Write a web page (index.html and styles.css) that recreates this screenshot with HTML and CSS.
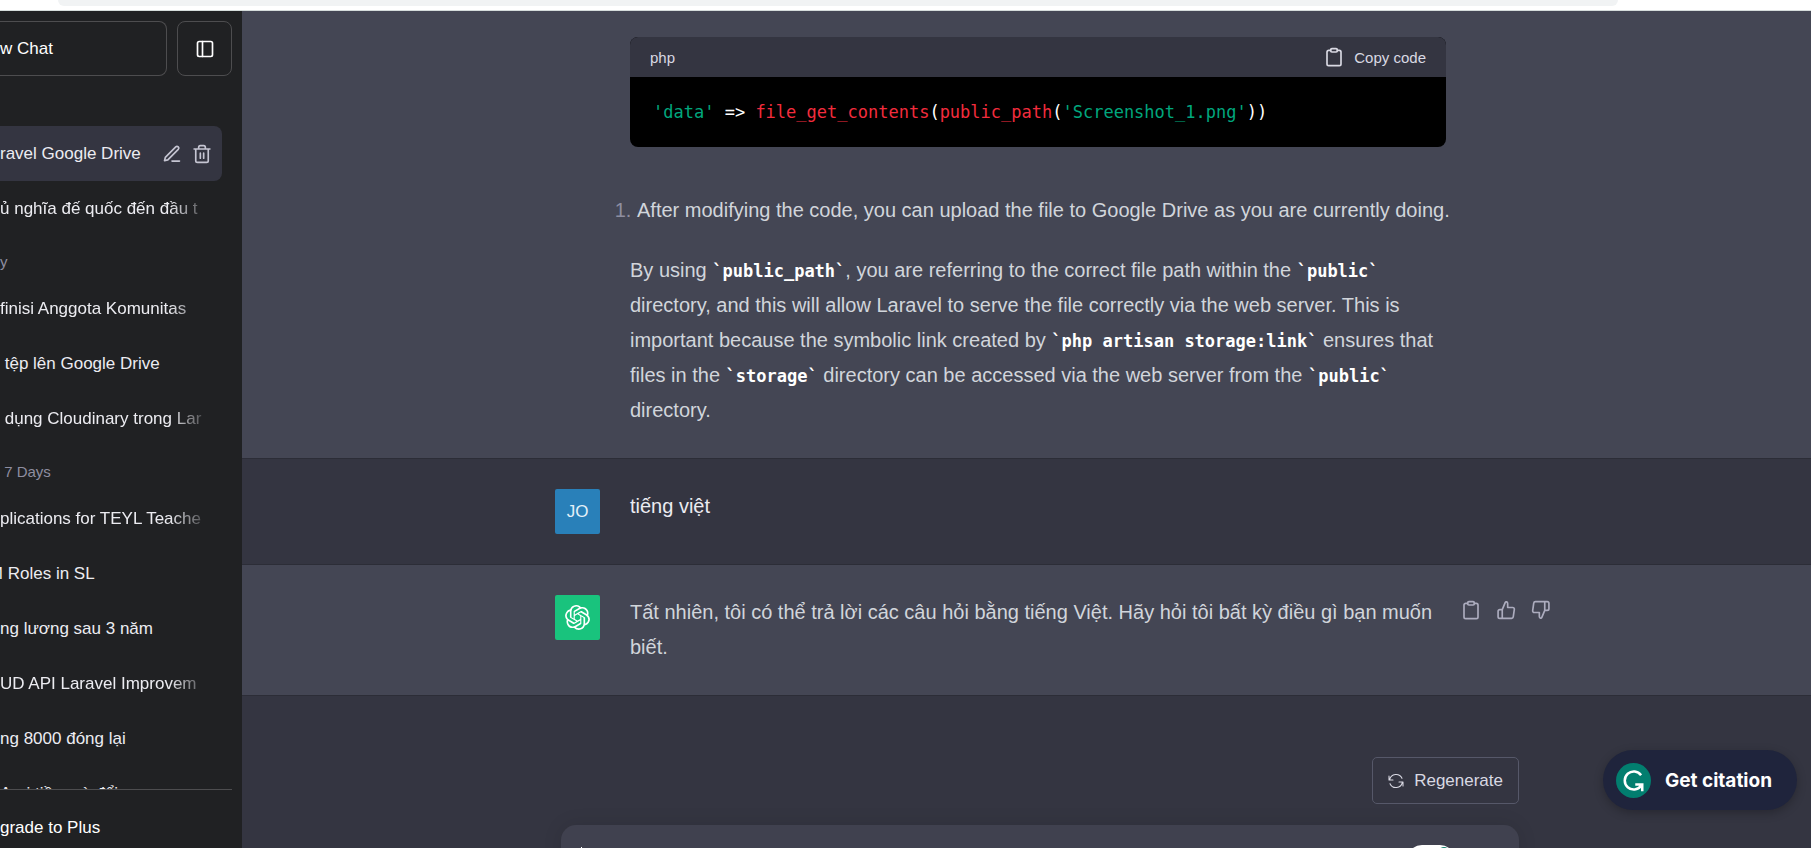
FILE: index.html
```html
<!DOCTYPE html>
<html lang="en">
<head>
<meta charset="utf-8">
<title>Laravel Google Drive</title>
<link rel="stylesheet" href="styles.css">
</head>
<body>
<div class="browser-bar"><div class="address"></div></div>
<div class="app">
  <nav class="sidebar">
    <div class="top-buttons">
      <button class="new-chat" type="button">w Chat</button>
      <button class="toggle" type="button" aria-label="Close sidebar">
        <svg class="icon" viewBox="0 0 24 24"><rect x="3" y="3" width="18" height="18" rx="2"/><path d="M9 3v18"/></svg>
      </button>
    </div>
    <div class="history">
      <div class="row active">
        <a class="title" href="#">ravel Google Drive</a>
        <button class="icon-button" type="button" aria-label="Rename">
          <svg class="icon" viewBox="0 0 24 24"><path d="M12 20.500h9M16.500 3.500a2.120 2.120 0 0 1 3 3L7 19l-4 1 1-4z"/></svg>
        </button>
        <button class="icon-button" type="button" aria-label="Delete">
          <svg class="icon" viewBox="0 0 24 24"><path d="M2.500 6h19M19.500 6v14a2 2 0 0 1-2 2h-11a2 2 0 0 1-2-2V6M8 6V4a2 2 0 0 1 2-2h4a2 2 0 0 1 2 2v2M10 11v6M14 11v6"/></svg>
        </button>
      </div>
      <div class="row"><a class="title fade" href="#">ủ nghĩa đế quốc đến đầu t</a></div>
      <h3 class="period">y</h3>
      <div class="row"><a class="title fade" href="#">finisi Anggota Komunitas</a></div>
      <div class="row"><a class="title" href="#">&nbsp;tệp lên Google Drive</a></div>
      <div class="row"><a class="title fade" href="#">&nbsp;dụng Cloudinary trong Lar</a></div>
      <h3 class="period">&nbsp;7 Days</h3>
      <div class="row"><a class="title fade" href="#">plications for TEYL Teache</a></div>
      <div class="row"><a class="title" href="#"><span class="cut">M</span> Roles in SL</a></div>
      <div class="row"><a class="title" href="#">ng lương sau 3 năm</a></div>
      <div class="row"><a class="title fade" href="#">UD API Laravel Improvem</a></div>
      <div class="row"><a class="title" href="#">ng 8000 đóng lại</a></div>
      <div class="row"><a class="title" href="#">Agri tiền mà đổi</a></div>
    </div>
    <div class="account"><a class="row upgrade" href="#">grade to Plus</a></div>
  </nav>

  <main class="chat">
    <article class="message assistant first">
      <div class="column">
        <div class="avatar-slot"></div>
        <div class="text">
          <div class="code-block">
            <div class="code-head">
              <span>php</span>
              <button class="copy" type="button">
                <svg class="icon" viewBox="0 0 24 24"><path d="M8 4H5.600A2 2 0 0 0 3.600 6v14.300a2 2 0 0 0 2 2h12.800a2 2 0 0 0 2-2V6a2 2 0 0 0-2-2H16"/><rect x="8" y="2" width="8" height="4" rx="1.500"/></svg>
                Copy code
              </button>
            </div>
            <pre class="code"><code><span class="str">'data'</span> =&gt; <span class="fn">file_get_contents</span>(<span class="fn">public_path</span>(<span class="str">'Screenshot_1.png'</span>))</code></pre>
          </div>
          <ol class="steps"><li>After modifying the code, you can upload the file to Google Drive as you are currently doing.</li></ol>
          <p>By using <code>`public_path`</code>, you are referring to the correct file path within the <code>`public`</code> directory, and this will allow Laravel to serve the file correctly via the web server. This is important because the symbolic link created by <code>`php artisan storage:link`</code> ensures that files in the <code>`storage`</code> directory can be accessed via the web server from the <code>`public`</code> directory.</p>
        </div>
      </div>
    </article>

    <article class="message user">
      <div class="column">
        <div class="avatar">JO</div>
        <div class="text"><p>tiếng việt</p></div>
      </div>
    </article>

    <article class="message assistant">
      <div class="column">
        <div class="avatar bot">
          <svg class="logo" viewBox="0 0 24 24"><path d="M22.2819 9.8211a5.9847 5.9847 0 0 0-.5157-4.9108 6.0462 6.0462 0 0 0-6.5098-2.9A6.0651 6.0651 0 0 0 4.9807 4.1818a5.9847 5.9847 0 0 0-3.9977 2.9 6.0462 6.0462 0 0 0 .7427 7.0966 5.98 5.98 0 0 0 .511 4.9107 6.051 6.051 0 0 0 6.5146 2.9001A5.9847 5.9847 0 0 0 13.2599 24a6.0557 6.0557 0 0 0 5.7718-4.2058 5.9894 5.9894 0 0 0 3.9977-2.9001 6.0557 6.0557 0 0 0-.7475-7.0729zm-9.022 12.6081a4.4755 4.4755 0 0 1-2.8764-1.0408l.1419-.0804 4.7783-2.7582a.7948.7948 0 0 0 .3927-.6813v-6.7369l2.02 1.1686a.071.071 0 0 1 .038.052v5.5826a4.504 4.504 0 0 1-4.4945 4.4944zm-9.6607-4.1254a4.4708 4.4708 0 0 1-.5346-3.0137l.142.0852 4.783 2.7582a.7712.7712 0 0 0 .7806 0l5.8428-3.3685v2.3324a.0804.0804 0 0 1-.0332.0615L9.74 19.9502a4.4992 4.4992 0 0 1-6.1408-1.6464zM2.3408 7.8956a4.485 4.485 0 0 1 2.3655-1.9728V11.6a.7664.7664 0 0 0 .3879.6765l5.8144 3.3543-2.0201 1.1685a.0757.0757 0 0 1-.071 0l-4.8303-2.7865A4.504 4.504 0 0 1 2.3408 7.872zm16.5963 3.8558L13.1038 8.364 15.1192 7.2a.0757.0757 0 0 1 .071 0l4.8303 2.7913a4.4944 4.4944 0 0 1-.6765 8.1042v-5.6772a.79.79 0 0 0-.407-.667zm2.0107-3.0231l-.142-.0852-4.7735-2.7818a.7759.7759 0 0 0-.7854 0L9.409 9.2297V6.8974a.0662.0662 0 0 1 .0284-.0615l4.8303-2.7866a4.4992 4.4992 0 0 1 6.6802 4.66zM8.3065 12.863l-2.02-1.1638a.0804.0804 0 0 1-.038-.0567V6.0742a4.4992 4.4992 0 0 1 7.3757-3.4537l-.142.0805L8.704 5.459a.7948.7948 0 0 0-.3927.6813zm1.0976-2.3654l2.602-1.4998 2.6069 1.4998v2.9994l-2.5974 1.4997-2.6067-1.4997Z"/></svg>
        </div>
        <div class="text"><p>Tất nhiên, tôi có thể trả lời các câu hỏi bằng tiếng Việt. Hãy hỏi tôi bất kỳ điều gì bạn muốn biết.</p></div>
        <div class="actions">
          <button class="icon-button" type="button" aria-label="Copy"><svg class="icon" viewBox="0 0 24 24"><path d="M8 4H5.600A2 2 0 0 0 3.600 6v14.300a2 2 0 0 0 2 2h12.800a2 2 0 0 0 2-2V6a2 2 0 0 0-2-2H16"/><rect x="8" y="2" width="8" height="4" rx="1.500"/></svg></button>
          <button class="icon-button" type="button" aria-label="Good response"><svg class="icon" viewBox="0 0 24 24"><path d="M7.500 11.500 11 3.200c.6-1.500 3-1.200 3 1V9h6a2 2 0 0 1 2 2.300l-1.300 9a2 2 0 0 1-2 1.700H4.500a2 2 0 0 1-2-2v-6.500a2 2 0 0 1 2-2zV22"/></svg></button>
          <button class="icon-button" type="button" aria-label="Bad response"><svg class="icon" viewBox="0 0 24 24"><path d="M16.500 12.500 13 20.800c-.6 1.500-3 1.200-3-1V15H4a2 2 0 0 1-2-2.300l1.300-9a2 2 0 0 1 2-1.700h14.200a2 2 0 0 1 2 2v6.500a2 2 0 0 1-2 2zV2"/></svg></button>
        </div>
      </div>
    </article>

    <form class="footer">
      <button class="regenerate" type="button">
        <svg class="icon" viewBox="0 0 24 24"><path d="M1.500 4.500v6h6M22.500 19.500v-6h-6M2.500 10a9.800 9.800 0 0 1 18.500-2M21.500 14a9.800 9.800 0 0 1-18.500 2"/></svg>
        Regenerate
      </button>
      <div class="composer">
        <span class="caret"></span>
        <textarea class="prompt" aria-label="Message"></textarea>
        <button class="pill" type="button" aria-label="Writing assistant"><span class="dot"></span></button>
      </div>
    </form>
  </main>
  <button class="citation" type="button">
    <svg class="badge" viewBox="0 0 36 36"><circle cx="18" cy="18" r="18"/><path d="M25.800 12.500A9.300 9.300 0 1 0 25.800 23.500M19.800 22h7.200v7"/></svg>
    Get citation
  </button>
</div>
</body>
</html>
```
FILE: styles.css
```css
* { box-sizing: border-box; }
body {
  margin: 0;
  height: 100vh;
  overflow: hidden;
  display: flex;
  flex-direction: column;
  background: #343541;
  color: #ececf1;
  font-family: "Liberation Sans", Arial, sans-serif;
  font-size: 17px;
}
button { font: inherit; color: inherit; background: none; border: 0; padding: 0; }
a { color: inherit; text-decoration: none; }
p { margin: 0; }

.icon {
  width: 20px;
  height: 20px;
  flex: none;
  fill: none;
  stroke: currentColor;
  stroke-width: 2;
  stroke-linecap: round;
  stroke-linejoin: round;
}
.icon-button { display: flex; }

.browser-bar {
  height: 11px;
  flex: none;
  padding: 0 193px 0 58px;
  background: #fff;
  border-bottom: 1px solid #d5dcdb;
}
.address { height: 6px; background: #f1f3f4; border-radius: 0 0 16px 16px; }

.app { flex: 1; min-height: 0; display: flex; }

.sidebar {
  width: 242px;
  flex: none;
  display: flex;
  flex-direction: column;
  padding: 10px 10px 0 0;
  background: #202123;
}
.top-buttons { display: flex; gap: 10px; padding-bottom: 50px; }
.new-chat {
  flex: 1;
  height: 55px;
  text-align: left;
  color: #fff;
  border: 1px solid #4d4d4f;
  border-left: 0;
  border-radius: 0 8px 8px 0;
}
.toggle {
  width: 55px;
  height: 55px;
  display: flex;
  align-items: center;
  justify-content: center;
  color: #fff;
  border: 1px solid #4d4d4f;
  border-radius: 8px;
}
.history { flex: 1; min-height: 0; overflow: hidden; padding-right: 10px; }
.row { height: 55px; display: flex; align-items: center; gap: 10px; padding-right: 10px; }
.active { background: #343541; border-radius: 0 8px 8px 0; color: #ececf1; }
.active .icon { color: #c5c5d2; }
.title { flex: 1; white-space: nowrap; overflow: hidden; line-height: 30px; }
.fade { mask-image: linear-gradient(to right, #000 80%, transparent); }
.cut { display: inline-flex; justify-content: flex-end; width: 3px; overflow: hidden; }
.period {
  height: 45px;
  margin: 0;
  padding-top: 14px;
  font-size: 15px;
  line-height: 24px;
  font-weight: 500;
  color: #8e8ea0;
}
.account { flex: none; height: 59px; overflow: hidden; border-top: 1px solid #4d4d4f; padding-top: 10px; }
.upgrade { color: #fff; }

.chat { flex: 1; min-width: 0; display: flex; flex-direction: column; overflow: hidden; }
.message { border-bottom: 1px solid #2c2d37; padding: 30px 0; flex: none; }
.assistant { background: #444654; color: #d1d5db; }
.first { padding-top: 26px; }
.column {
  max-width: 1049px;
  margin: 0 auto;
  padding-left: 53px;
  display: grid;
  grid-template-columns: 45px minmax(0, 1fr) 90px;
  column-gap: 30px;
}
.text { font-size: 20px; line-height: 35px; margin-right: -15px; }
.avatar {
  height: 45px;
  display: flex;
  align-items: center;
  justify-content: center;
  border-radius: 2px;
  background: #2980b9;
  color: #e3f0f8;
}
.bot { background: #19c37d; color: #fff; }
.logo { width: 25px; height: 25px; fill: currentColor; }
.actions { display: flex; gap: 15px; padding-top: 5px; color: #acacbe; }

.code-block { border-radius: 8px; overflow: hidden; background: #000; margin-bottom: 46px; }
.code-head {
  height: 40px;
  padding: 0 20px;
  display: flex;
  align-items: center;
  justify-content: space-between;
  background: #343541;
  color: #d9d9e3;
  font-size: 15px;
}
.copy { display: flex; align-items: center; gap: 10px; }
.code, code { font-family: "DejaVu Sans Mono", "Liberation Mono", monospace; font-size: 17px; line-height: 30px; }
.code { margin: 0; padding: 20px 23px; color: #fff; }
p code { font-weight: 700; color: #fff; line-height: 20px; }
.str { color: #00a67d; }
.fn { color: #f22c3d; }

.steps { margin: 0 -20px 25px 0; padding-left: 7px; }
.steps li::marker { color: #8e8ea0; }

.footer {
  width: 100%;
  max-width: 985px;
  margin: 0 auto;
  padding: 61px 0 0 27px;
  display: flex;
  flex-direction: column;
  gap: 21px;
}
.regenerate {
  align-self: flex-end;
  flex: none;
  height: 47px;
  padding: 0 15px;
  display: flex;
  align-items: center;
  gap: 10px;
  border: 1px solid #565869;
  border-radius: 5px;
  color: #d9d9e3;
}
.regenerate .icon { width: 16px; height: 16px; stroke-width: 1.6; }
.composer {
  height: 70px;
  flex: none;
  display: flex;
  padding: 20px 64px 0 20px;
  background: #40414f;
  border-radius: 15px;
  box-shadow: 0 0 19px rgba(0, 0, 0, .1);
}
.caret { width: 1px; height: 24px; margin-top: 2px; background: #fff; }
.prompt { flex: 1; height: 30px; border: 0; padding: 0; resize: none; background: none; color: #fff; font: inherit; }
.pill { width: 48px; height: 30px; border-radius: 15px; background: #fff; display: flex; justify-content: flex-end; padding: 2px 5px; }
.dot { width: 12px; height: 12px; border-radius: 6px; background: #15806e; }

.citation {
  position: absolute;
  right: 14px;
  bottom: 38px;
  height: 60px;
  padding: 0 25px 0 13px;
  display: flex;
  align-items: center;
  gap: 14px;
  border-radius: 30px;
  background: #1f243c;
  box-shadow: 0 3px 10px rgba(0, 0, 0, .25);
  color: #fff;
  font-family: Inter, sans-serif;
  font-size: 19px;
  font-weight: 700;
}
.badge { width: 35px; height: 35px; fill: #027e6f; }
.badge path { fill: none; stroke: #fff; stroke-width: 2.6; }
```
